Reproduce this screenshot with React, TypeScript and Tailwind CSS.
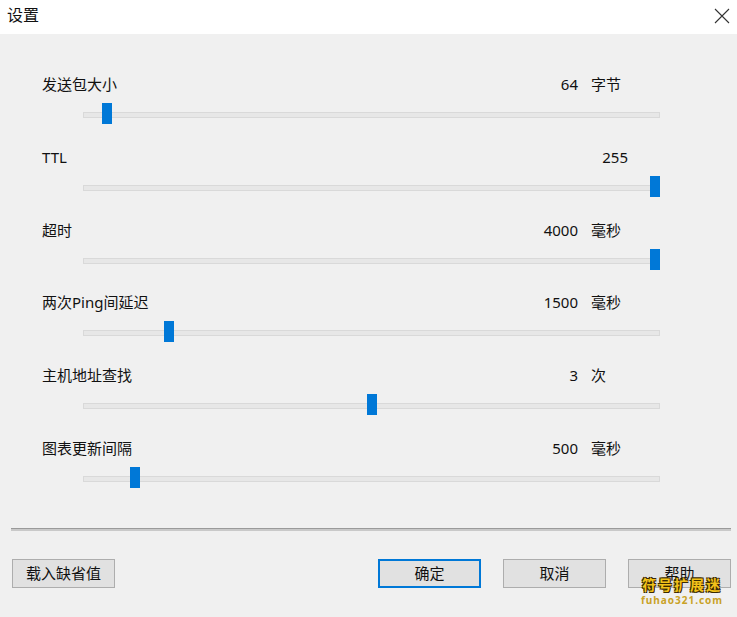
import React from 'react';

type Row = {
    label: string;
    value: string;
    unit?: string;
    pos: number; // thumb position, 0..1
};

const rows: Row[] = [
    { label: '发送包大小', value: '64', unit: '字节', pos: 19 / 567 },
    { label: 'TTL', value: '255', pos: 1 },
    { label: '超时', value: '4000', unit: '毫秒', pos: 1 },
    { label: '两次Ping间延迟', value: '1500', unit: '毫秒', pos: 81 / 567 },
    { label: '主机地址查找', value: '3', unit: '次', pos: 284 / 567 },
    { label: '图表更新间隔', value: '500', unit: '毫秒', pos: 47 / 567 },
];

const TRACK = 577;
const THUMB = 10;

function Slider({ pos }: { pos: number }) {
    return (
        <div className="relative ml-[41px] mt-[9px] h-[21px] w-[577px] pt-[9px]">
            <div className="h-[6px] border border-[#d9d9d9] bg-[#e7e7e7]" />
            <div
                className="absolute top-0 h-[21px] w-[10px] bg-[#0078d7]"
                style={{ left: Math.round(pos * (TRACK - THUMB)) }}
            />
        </div>
    );
}

function Button({ children, primary }: { children: React.ReactNode; primary?: boolean }) {
    return (
        <button
            className={
                primary
                    ? 'flex h-[29px] w-[103px] items-center justify-center border-2 border-[#0078d7] bg-[#e1e1e1] text-[15px] text-[#111]'
                    : 'flex h-[29px] w-[103px] items-center justify-center border border-[#adadad] bg-[#e1e1e1] text-[15px] text-[#111]'
            }
        >
            {children}
        </button>
    );
}

export default function App() {
    return (
        <div
            className="relative h-[617px] w-[737px] overflow-hidden bg-[#f0f0f0] text-[#111]"
            style={{ fontFamily: '"Noto Sans", "Noto Sans CJK SC", sans-serif' }}
        >
            {/* title bar */}
            <div className="flex h-[34px] items-center justify-between bg-white pl-[7px] pr-[7px]">
                <span className="mb-[4px] text-[16px] leading-5">设置</span>
                <svg width="16" height="16" viewBox="0 0 16 16" className="mb-[3px]">
                    <path d="M1 1 L15 15 M15 1 L1 15" stroke="#333" strokeWidth="1.1" fill="none" />
                </svg>
            </div>

            {/* sliders */}
            <div className="pl-[42px] pt-[40px]">
                {rows.map((r) => (
                    <div key={r.label} className="h-[72.8px]">
                        <div className="flex h-5 w-[618px] items-center text-[15px] leading-5">
                            <span className="flex-1">{r.label}</span>
                            <span className="text-right">{r.value}</span>
                            {r.unit ? (
                                <span className="ml-[13px] w-[69px]">{r.unit}</span>
                            ) : (
                                <span className="w-[32px]" />
                            )}
                        </div>
                        <Slider pos={r.pos} />
                    </div>
                ))}
            </div>

            {/* separator */}
            <div className="mx-[11px] mt-[17px] mr-[6px]">
                <div className="h-px bg-[#9a9a9a]" />
                <div className="h-[2px] bg-[#c9c9c9]" />
            </div>

            {/* buttons */}
            <div className="mt-[28px] flex pl-[12px] pr-[6px]">
                <Button>载入缺省值</Button>
                <div className="ml-auto flex gap-[22px]">
                    <Button primary>确定</Button>
                    <Button>取消</Button>
                    <Button>帮助</Button>
                </div>
            </div>

            {/* watermark */}
            <div className="absolute left-[641px] top-[578px] flex w-[82px] flex-col items-center leading-none">
                <span
                    className="text-[14px] font-bold tracking-[2px] text-[#f2c21a]"
                    style={{ textShadow: '1px 1px 0 #3a2a00, -1px -1px 0 #3a2a00, 1px -1px 0 #3a2a00, -1px 1px 0 #3a2a00' }}
                >
                    符号扩展迷
                </span>
                <span className="mt-[3px] text-[10px] font-bold tracking-[1px] text-[#c9a227]">fuhao321.com</span>
            </div>
        </div>
    );
}
